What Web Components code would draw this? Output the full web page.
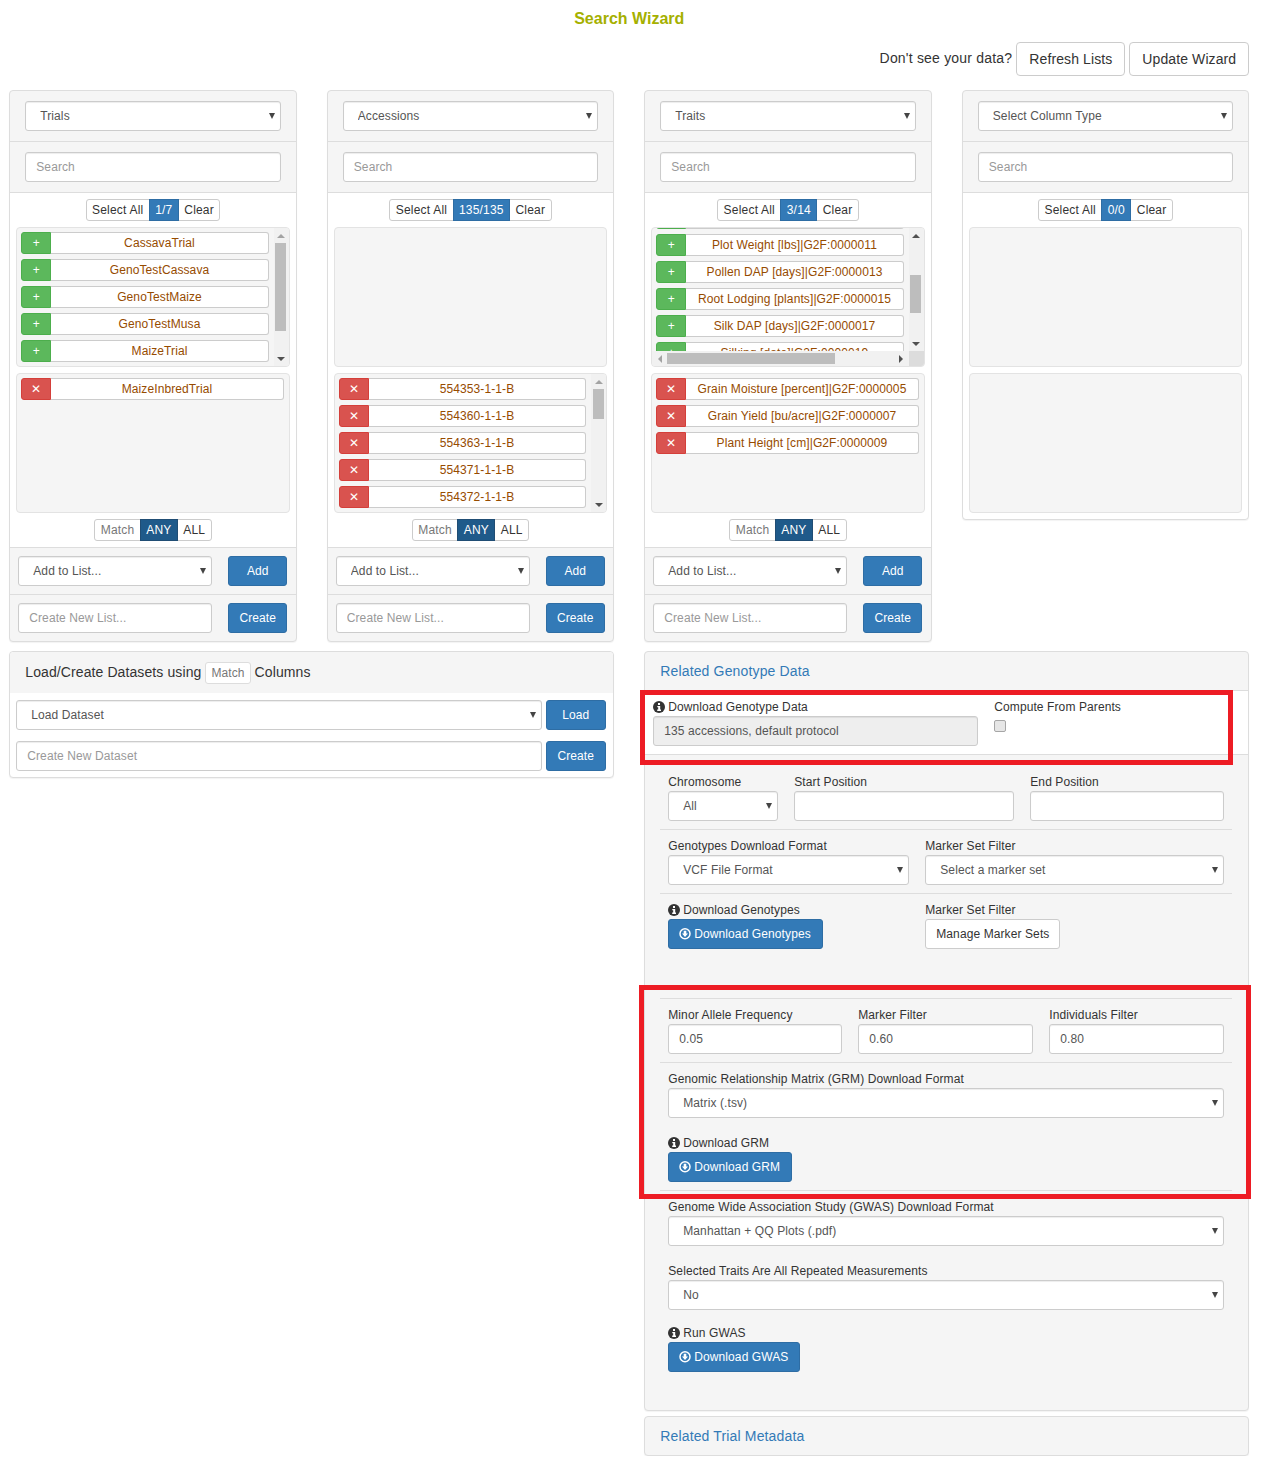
<!DOCTYPE html>
<html>
<head>
<meta charset="utf-8">
<title>Search Wizard</title>
<style>
  html, body { margin: 0; padding: 0; background: #fff; }
  body { font-family: "Liberation Sans", Arial, sans-serif; font-size: 12px; letter-spacing: .1px; color: #333; }
</style>
</head>
<body>

<wizard-page>
  <wizard-top slot="top"></wizard-top>

  <wizard-column heading="Trials" count="1/7">
    <list-box slot="available" vbar="0 88">
      <list-item kind="add">CassavaTrial</list-item>
      <list-item kind="add">GenoTestCassava</list-item>
      <list-item kind="add">GenoTestMaize</list-item>
      <list-item kind="add">GenoTestMusa</list-item>
      <list-item kind="add">MaizeTrial</list-item>
    </list-box>
    <list-box slot="selected">
      <list-item kind="remove">MaizeInbredTrial</list-item>
    </list-box>
  </wizard-column>

  <wizard-column heading="Accessions" count="135/135">
    <list-box slot="available"></list-box>
    <list-box slot="selected" vbar="0 30">
      <list-item kind="remove">554353-1-1-B</list-item>
      <list-item kind="remove">554360-1-1-B</list-item>
      <list-item kind="remove">554363-1-1-B</list-item>
      <list-item kind="remove">554371-1-1-B</list-item>
      <list-item kind="remove">554372-1-1-B</list-item>
    </list-box>
  </wizard-column>

  <wizard-column heading="Traits" count="3/14">
    <list-box slot="available" vbar="32 38" hbar="0 168" rows-above="4" scroll-top="106">
      <list-item kind="add">Plot Weight [lbs]|G2F:0000011</list-item>
      <list-item kind="add">Pollen DAP [days]|G2F:0000013</list-item>
      <list-item kind="add">Root Lodging [plants]|G2F:0000015</list-item>
      <list-item kind="add">Silk DAP [days]|G2F:0000017</list-item>
      <list-item kind="add">Silking [date]|G2F:0000019</list-item>
    </list-box>
    <list-box slot="selected">
      <list-item kind="remove">Grain Moisture [percent]|G2F:0000005</list-item>
      <list-item kind="remove">Grain Yield [bu/acre]|G2F:0000007</list-item>
      <list-item kind="remove">Plant Height [cm]|G2F:0000009</list-item>
    </list-box>
  </wizard-column>

  <wizard-column heading="Select Column Type" count="0/0" short>
    <list-box slot="available"></list-box>
    <list-box slot="selected"></list-box>
  </wizard-column>

  <dataset-panel></dataset-panel>
  <genotype-panel></genotype-panel>
</wizard-page>

<script>
const baseControl = `
  box-sizing: border-box; width: 100%; height: 30px; padding: 5px 10px;
  font: 12px/18px "Liberation Sans", Arial, sans-serif; letter-spacing: .1px; color: #555;
  background: #fff; border: 1px solid #ccc; border-radius: 3px;
  box-shadow: inset 0 1px 1px rgba(0, 0, 0, .075); display: block; margin: 0;
`;

const icons = {
  info: `<svg width="12" height="12" viewBox="0 0 12 12" aria-hidden="true"><circle cx="6" cy="6" r="6" fill="currentColor"/><rect x="5" y="2" width="2" height="2" fill="#fff"/><path d="M4.3 5h2.9v3.6h.8V10H4.2V8.6h1V6.3h-.9z" fill="#fff"/></svg>`,
  download: `<svg width="12" height="12" viewBox="0 0 12 12" aria-hidden="true"><circle cx="6" cy="5.8" r="5" fill="none" stroke="currentColor" stroke-width="1.5"/><path d="M4.7 2.7h2.6v2.9h1.7L6 8.9 3 5.6h1.7z" fill="currentColor"/></svg>`
};

class FormSelect extends HTMLElement {
  static get observedAttributes() { return ['value']; }
  constructor() {
    super();
    this.attachShadow({mode: 'open'});
    this.shadowRoot.innerHTML = `
      <style>
        :host { display: block; position: relative; }
        select { ${baseControl} padding-left: 14px; appearance: none; -webkit-appearance: none; }
        .arrow {
          position: absolute; right: 6px; top: 12px; width: 0; height: 0; pointer-events: none;
          border-top: 6px solid #444; border-left: 3px solid transparent; border-right: 3px solid transparent;
        }
      </style>
      <select><option></option></select><span class="arrow"></span>
    `;
  }
  attributeChangedCallback(name, old, value) {
    this.shadowRoot.querySelector('option').textContent = value;
  }
}

class FormInput extends HTMLElement {
  constructor() {
    super();
    this.attachShadow({mode: 'open'});
    this.shadowRoot.innerHTML = `
      <style>
        :host { display: block; }
        input { ${baseControl} }
        input::placeholder { color: #999; opacity: 1; }
        input:disabled { background: #eee; color: #555; -webkit-text-fill-color: #555; }
      </style>
      <input type="text">
    `;
  }
  connectedCallback() {
    const input = this.shadowRoot.querySelector('input');
    input.placeholder = this.getAttribute('placeholder') || '';
    input.value = this.getAttribute('value') || '';
    input.disabled = this.hasAttribute('disabled');
  }
}

class UiBtn extends HTMLElement {
  constructor() {
    super();
    this.attachShadow({mode: 'open'});
    this.shadowRoot.innerHTML = `
      <style>
        :host { display: inline-block; }
        button {
          box-sizing: border-box; display: flex; align-items: center; justify-content: center; gap: 3px;
          width: 100%; height: 30px; padding: 0 10px; margin: 0;
          font: 12px/18px "Liberation Sans", Arial, sans-serif; letter-spacing: .1px; white-space: nowrap;
          color: #333; background: #fff; border: 1px solid #ccc; border-radius: 3px;
        }
        :host([kind="primary"]) button { color: #fff; background: #337ab7; border-color: #2e6da4; }
        :host([icon]) button { padding-right: 11px; }
        :host([size="big"]) button { height: 34px; padding: 0 12px; font-size: 14px; line-height: 20px; border-radius: 4px; }
        svg { display: block; }
      </style>
      <button type="button"><span id="icon"></span><slot></slot></button>
    `;
  }
  connectedCallback() {
    const icon = this.shadowRoot.querySelector('#icon');
    if (!icon) return;
    if (this.getAttribute('icon')) icon.innerHTML = icons[this.getAttribute('icon')];
    else icon.remove();
  }
}

// small joined buttons: Select All | 1/7 | Clear, Match | ANY | ALL
class BtnGroup extends HTMLElement {
  static get observedAttributes() { return ['parts']; }
  constructor() {
    super();
    this.attachShadow({mode: 'open'});
    this.shadowRoot.innerHTML = `
      <style>
        :host { display: flex; justify-content: center; }
        .group { display: flex; height: 22px; }
        span {
          box-sizing: border-box; height: 22px; padding: 0 5.4px; line-height: 20px; font-size: 12px; letter-spacing: .2px;
          color: #333; background: #fff; border: 1px solid #ccc; margin-left: -1px; white-space: nowrap;
        }
        span:first-child { margin-left: 0; border-radius: 3px 0 0 3px; }
        span:last-child { border-radius: 0 3px 3px 0; }
        .blue { color: #fff; background: #337ab7; border-color: #2e6da4; position: relative; }
        .dark { color: #fff; background: #1f5a8a; border-color: #204d74; position: relative; }
        .muted { color: #777; }
      </style>
      <div class="group"></div>
    `;
  }
  attributeChangedCallback(name, old, value) {
    const group = this.shadowRoot.querySelector('.group');
    group.innerHTML = '';
    for (const part of value.split(',')) {
      const [label, cls] = part.split(':');
      const span = document.createElement('span');
      span.textContent = label;
      if (cls) span.className = cls;
      group.appendChild(span);
    }
  }
}

class ListItem extends HTMLElement {
  constructor() {
    super();
    this.attachShadow({mode: 'open'});
    this.shadowRoot.innerHTML = `
      <style>
        :host { display: flex; height: 22px; margin-bottom: 5px; font-size: 12px; line-height: 20px; }
        .act {
          box-sizing: border-box; flex: 0 0 30px; text-align: center; color: #fff;
          border: 1px solid #4cae4c; background: #5cb85c; border-radius: 3px 0 0 3px;
        }
        :host([kind="remove"]) .act { background: #d9534f; border-color: #d43f3a; }
        .name {
          box-sizing: border-box; flex: 1; min-width: 0; text-align: center; color: #964b00; white-space: nowrap;
          background: #fff; border: 1px solid #ccc; border-left: 0; border-radius: 0 3px 3px 0;
        }
      </style>
      <span class="act"></span><span class="name"><slot></slot></span>
    `;
  }
  connectedCallback() {
    const kind = this.getAttribute('kind');
    this.shadowRoot.querySelector('.act').textContent = kind === 'remove' ? '✕' : kind === 'add' ? '+' : '';
  }
}

// the browser hides native scrollbars here, so the bars are drawn beside the list
class ListBox extends HTMLElement {
  constructor() {
    super();
    this.attachShadow({mode: 'open'});
    this.shadowRoot.innerHTML = `
      <style>
        :host {
          display: grid; grid-template-columns: minmax(0, 1fr) auto; grid-template-rows: minmax(0, 1fr) auto;
          box-sizing: border-box; height: 140px; overflow: hidden;
          background: #f5f5f5; border: 1px solid #e3e3e3; border-radius: 4px;
        }
        .view { overflow: hidden; padding: 4px 5px 0 4px; min-height: 0; }
        .bar { display: flex; background: #f1f1f1; }
        .bar.v { flex-direction: column; width: 15px; }
        .bar.h { width: auto; height: 15px; }
        .track { flex: 1; display: flex; min-width: 0; min-height: 0; }
        .v .track { flex-direction: column; padding: 0 2.5px 0 1.5px; }
        .h .track { padding: 2px 0; }
        .thumb { background: #bdbdbd; flex: none; }
        .btn { flex: 0 0 15px; width: 15px; height: 15px; display: flex; align-items: center; justify-content: center; }
        .tri { width: 0; height: 0; }
        .up, .down { border-left: 4px solid transparent; border-right: 4px solid transparent; }
        .left, .right { border-top: 4px solid transparent; border-bottom: 4px solid transparent; }
        .up { border-bottom: 4px solid #505050; }
        .down { border-top: 4px solid #505050; }
        .left { border-right: 4px solid #505050; }
        .right { border-left: 4px solid #505050; }
        .off.up { border-bottom-color: #a3a3a3; }
        .off.left { border-right-color: #a3a3a3; }
        .corner { background: #dcdcdc; }
      </style>
      <div class="view"><div class="above"></div><slot></slot></div>
    `;
  }
  addBar(type, spec) {
    const [offset, size] = spec.split(' ').map(Number);
    const first = type === 'v' ? 'up' : 'left';
    const last = type === 'v' ? 'down' : 'right';
    const bar = document.createElement('div');
    bar.className = `bar ${type}`;
    const gap = type === 'v' ? `margin-top:${offset}px;height:${size}px` : `margin-left:${offset}px;width:${size}px`;
    bar.innerHTML = `
      <div class="btn"><span class="tri ${first} ${offset === 0 ? 'off' : ''}"></span></div>
      <div class="track"><div class="thumb" style="${gap}"></div></div>
      <div class="btn"><span class="tri ${last}"></span></div>
    `;
    this.shadowRoot.appendChild(bar);
  }
  connectedCallback() {
    const view = this.shadowRoot.querySelector('.view');
    const above = this.shadowRoot.querySelector('.above');
    // rows scrolled out of sight carry no text, only the last one peeks in
    for (let i = 0; i < Number(this.getAttribute('rows-above') || 0); i++) {
      above.appendChild(document.createElement('list-item'));
    }
    if (this.getAttribute('vbar')) this.addBar('v', this.getAttribute('vbar'));
    else view.style.gridColumn = 'span 2';
    if (this.getAttribute('hbar')) {
      this.addBar('h', this.getAttribute('hbar'));
      const corner = document.createElement('div');
      corner.className = 'corner';
      this.shadowRoot.appendChild(corner);
    } else {
      view.style.gridRow = 'span 2';
      const bar = this.shadowRoot.querySelector('.bar.v');
      if (bar) bar.style.gridRow = 'span 2';
    }
    if (this.getAttribute('scroll-top')) view.scrollTop = Number(this.getAttribute('scroll-top'));
  }
}

class WizardColumn extends HTMLElement {
  constructor() {
    super();
    this.attachShadow({mode: 'open'});
    this.shadowRoot.innerHTML = `
      <style>
        :host {
          display: block; align-self: start; min-width: 0; background: #f5f5f5;
          border: 1px solid #ddd; border-radius: 4px; box-shadow: 0 1px 1px rgba(0, 0, 0, .05);
        }
        .head { padding: 10px 15px; border-bottom: 1px solid #ddd; }
        .main { padding: 6px; background: #fff; display: flex; flex-direction: column; gap: 6px; }
        .foot { padding: 8px 8.5px 8px 8px; border-top: 1px solid #ddd; display: grid; grid-template-columns: minmax(0, 1fr) 59px; gap: 16px; }
        ui-btn { display: block; }
        :host([short]) .foot, :host([short]) .match { display: none; }
        :host([short]) .main { border-radius: 0 0 4px 4px; }
      </style>
      <div class="head"><form-select id="type"></form-select></div>
      <div class="head"><form-input placeholder="Search"></form-input></div>
      <div class="main">
        <btn-group id="counts"></btn-group>
        <slot name="available"></slot>
        <slot name="selected"></slot>
        <btn-group class="match" parts="Match:muted,ANY:dark,ALL"></btn-group>
      </div>
      <div class="foot">
        <form-select value="Add to List..."></form-select>
        <ui-btn kind="primary">Add</ui-btn>
      </div>
      <div class="foot">
        <form-input placeholder="Create New List..."></form-input>
        <ui-btn kind="primary">Create</ui-btn>
      </div>
    `;
  }
  connectedCallback() {
    this.shadowRoot.querySelector('#type').setAttribute('value', this.getAttribute('heading'));
    this.shadowRoot.querySelector('#counts').setAttribute('parts', `Select All,${this.getAttribute('count')}:blue,Clear`);
  }
}

class FormField extends HTMLElement {
  constructor() {
    super();
    this.attachShadow({mode: 'open'});
    this.shadowRoot.innerHTML = `
      <style>
        :host { display: block; min-width: 0; }
        label { display: flex; align-items: flex-start; gap: 3px; height: 17px; font-size: 12px; line-height: 16px; color: #333; white-space: nowrap; }
        svg { display: block; margin-top: 2px; }
      </style>
      <label><span id="icon"></span><span id="text"></span></label>
      <slot></slot>
    `;
  }
  connectedCallback() {
    this.shadowRoot.querySelector('#text').textContent = this.getAttribute('label');
    const icon = this.shadowRoot.querySelector('#icon');
    if (!icon) return;
    if (this.hasAttribute('info')) icon.innerHTML = icons.info;
    else icon.remove();
  }
}

class FormRow extends HTMLElement {
  constructor() {
    super();
    this.attachShadow({mode: 'open'});
    this.shadowRoot.innerHTML = `
      <style>
        :host { display: grid; gap: 17px 16px; padding: 8px; }
        :host([divider]) { border-top: 1px solid #ddd; }
      </style>
      <slot></slot>
    `;
  }
  connectedCallback() {
    if (this.getAttribute('cols')) this.style.gridTemplateColumns = this.getAttribute('cols');
  }
}

class DatasetPanel extends HTMLElement {
  constructor() {
    super();
    this.attachShadow({mode: 'open'});
    this.shadowRoot.innerHTML = `
      <style>
        :host {
          display: block; grid-column: span 2; align-self: start; min-width: 0; background: #fff;
          border: 1px solid #ddd; border-radius: 4px; box-shadow: 0 1px 1px rgba(0, 0, 0, .05);
        }
        .head {
          display: flex; align-items: center; gap: 4px; height: 41px; padding: 0 15px;
          font-size: 14px; letter-spacing: .1px; color: #333;
          background: #f5f5f5; border-radius: 4px 4px 0 0;
        }
        .head .text { margin-bottom: 2px; }
        .tag {
          box-sizing: border-box; height: 22px; padding: 0 5px; line-height: 20px; font-size: 12px; letter-spacing: .1px; color: #777;
          background: #fff; border: 1px solid #ddd; border-radius: 3px;
        }
        .body { display: grid; grid-template-columns: minmax(0, 1fr) 60px; gap: 11px 4px; padding: 7px 7.5px 6px 6px; }
        ui-btn { display: block; }
      </style>
      <div class="head"><span class="text">Load/Create Datasets using</span><span class="tag">Match</span><span class="text">Columns</span></div>
      <div class="body">
        <form-select value="Load Dataset"></form-select>
        <ui-btn kind="primary">Load</ui-btn>
        <form-input placeholder="Create New Dataset"></form-input>
        <ui-btn kind="primary">Create</ui-btn>
      </div>
    `;
  }
}

class GenotypePanel extends HTMLElement {
  constructor() {
    super();
    this.attachShadow({mode: 'open'});
    this.shadowRoot.innerHTML = `
      <style>
        :host { display: block; grid-column: span 2; position: relative; min-width: 0; }
        .panel { background: #f5f5f5; border: 1px solid #ddd; border-radius: 4px; box-shadow: 0 1px 1px rgba(0, 0, 0, .05); }
        .title { height: 38px; padding: 0 15px; line-height: 38px; font-size: 14px; letter-spacing: .15px; color: #337ab7; }
        .top {
          display: grid; grid-template-columns: 325px minmax(0, 1fr); gap: 16px; padding: 8px;
          background: #fff; border-top: 1px solid #ddd; border-bottom: 1px solid #ddd;
        }
        .body { padding: 11px 16px 30px 15px; }
        .tail { margin-bottom: 41px; }
        .check {
          display: block; box-sizing: border-box; width: 12px; height: 12px; margin: 4px 0 0;
          appearance: none; -webkit-appearance: none; background: #e6e6e6; border: 1px solid #a6a6a6; border-radius: 2px;
        }
        .next { margin-top: 5px; }
        .mark { position: absolute; box-sizing: border-box; border: 5px solid #ed1c24; pointer-events: none; }
        .mark.one { left: -4.25px; top: 39px; width: 593px; height: 75px; }
        .mark.two { left: -5.25px; top: 334px; width: 612px; height: 214px; }
      </style>
      <div class="panel">
        <div class="title">Related Genotype Data</div>
        <div class="top">
          <form-field label="Download Genotype Data" info><form-input disabled value="135 accessions, default protocol"></form-input></form-field>
          <form-field label="Compute From Parents"><input class="check" type="checkbox" disabled></form-field>
        </div>
        <div class="body">
          <form-row cols="110px 220px minmax(0, 1fr)">
            <form-field label="Chromosome"><form-select value="All"></form-select></form-field>
            <form-field label="Start Position"><form-input></form-input></form-field>
            <form-field label="End Position"><form-input></form-input></form-field>
          </form-row>
          <form-row divider cols="241px minmax(0, 1fr)">
            <form-field label="Genotypes Download Format"><form-select value="VCF File Format"></form-select></form-field>
            <form-field label="Marker Set Filter"><form-select value="Select a marker set"></form-select></form-field>
          </form-row>
          <form-row divider cols="241px minmax(0, 1fr)" class="tail">
            <form-field label="Download Genotypes" info><ui-btn kind="primary" icon="download">Download Genotypes</ui-btn></form-field>
            <form-field label="Marker Set Filter"><ui-btn>Manage Marker Sets</ui-btn></form-field>
          </form-row>
          <form-row divider cols="174px 175px minmax(0, 1fr)">
            <form-field label="Minor Allele Frequency"><form-input value="0.05"></form-input></form-field>
            <form-field label="Marker Filter"><form-input value="0.60"></form-input></form-field>
            <form-field label="Individuals Filter"><form-input value="0.80"></form-input></form-field>
          </form-row>
          <form-row divider>
            <form-field label="Genomic Relationship Matrix (GRM) Download Format"><form-select value="Matrix (.tsv)"></form-select></form-field>
            <form-field label="Download GRM" info><ui-btn kind="primary" icon="download">Download GRM</ui-btn></form-field>
          </form-row>
          <form-row divider>
            <form-field label="Genome Wide Association Study (GWAS) Download Format"><form-select value="Manhattan + QQ Plots (.pdf)"></form-select></form-field>
            <form-field label="Selected Traits Are All Repeated Measurements"><form-select value="No"></form-select></form-field>
            <form-field class="less" label="Run GWAS" info><ui-btn kind="primary" icon="download">Download GWAS</ui-btn></form-field>
          </form-row>
        </div>
      </div>
      <div class="panel next">
        <div class="title">Related Trial Metadata</div>
      </div>
      <div class="mark one"></div>
      <div class="mark two"></div>
    `;
    this.shadowRoot.querySelector('.less').style.marginTop = '-2px';
  }
}

class WizardTop extends HTMLElement {
  constructor() {
    super();
    this.attachShadow({mode: 'open'});
    this.shadowRoot.innerHTML = `
      <style>
        :host { display: block; }
        h1 { margin: 0; height: 36px; line-height: 37px; text-align: center; font-size: 16px; font-weight: bold; letter-spacing: 0; color: #a5b000; }
        .bar { display: flex; justify-content: flex-end; align-items: center; gap: 4px; margin-top: 6px; font-size: 14px; color: #333; }
        .bar span { letter-spacing: .2px; margin-bottom: 2px; }
      </style>
      <h1>Search Wizard</h1>
      <div class="bar">
        <span>Don't see your data?</span>
        <ui-btn size="big">Refresh Lists</ui-btn>
        <ui-btn size="big">Update Wizard</ui-btn>
      </div>
    `;
  }
}

class WizardPage extends HTMLElement {
  constructor() {
    super();
    this.attachShadow({mode: 'open'});
    this.shadowRoot.innerHTML = `
      <style>
        :host { display: block; padding: 0 14.75px 0 9.25px; }
        .grid { display: grid; grid-template-columns: repeat(4, minmax(0, 1fr)); gap: 9px 30px; margin-top: 14px; }
      </style>
      <slot name="top"></slot>
      <div class="grid"><slot></slot></div>
    `;
  }
}

customElements.define('form-select', FormSelect);
customElements.define('form-input', FormInput);
customElements.define('ui-btn', UiBtn);
customElements.define('btn-group', BtnGroup);
customElements.define('list-item', ListItem);
customElements.define('list-box', ListBox);
customElements.define('wizard-column', WizardColumn);
customElements.define('form-field', FormField);
customElements.define('form-row', FormRow);
customElements.define('dataset-panel', DatasetPanel);
customElements.define('genotype-panel', GenotypePanel);
customElements.define('wizard-top', WizardTop);
customElements.define('wizard-page', WizardPage);
</script>
</body>
</html>
